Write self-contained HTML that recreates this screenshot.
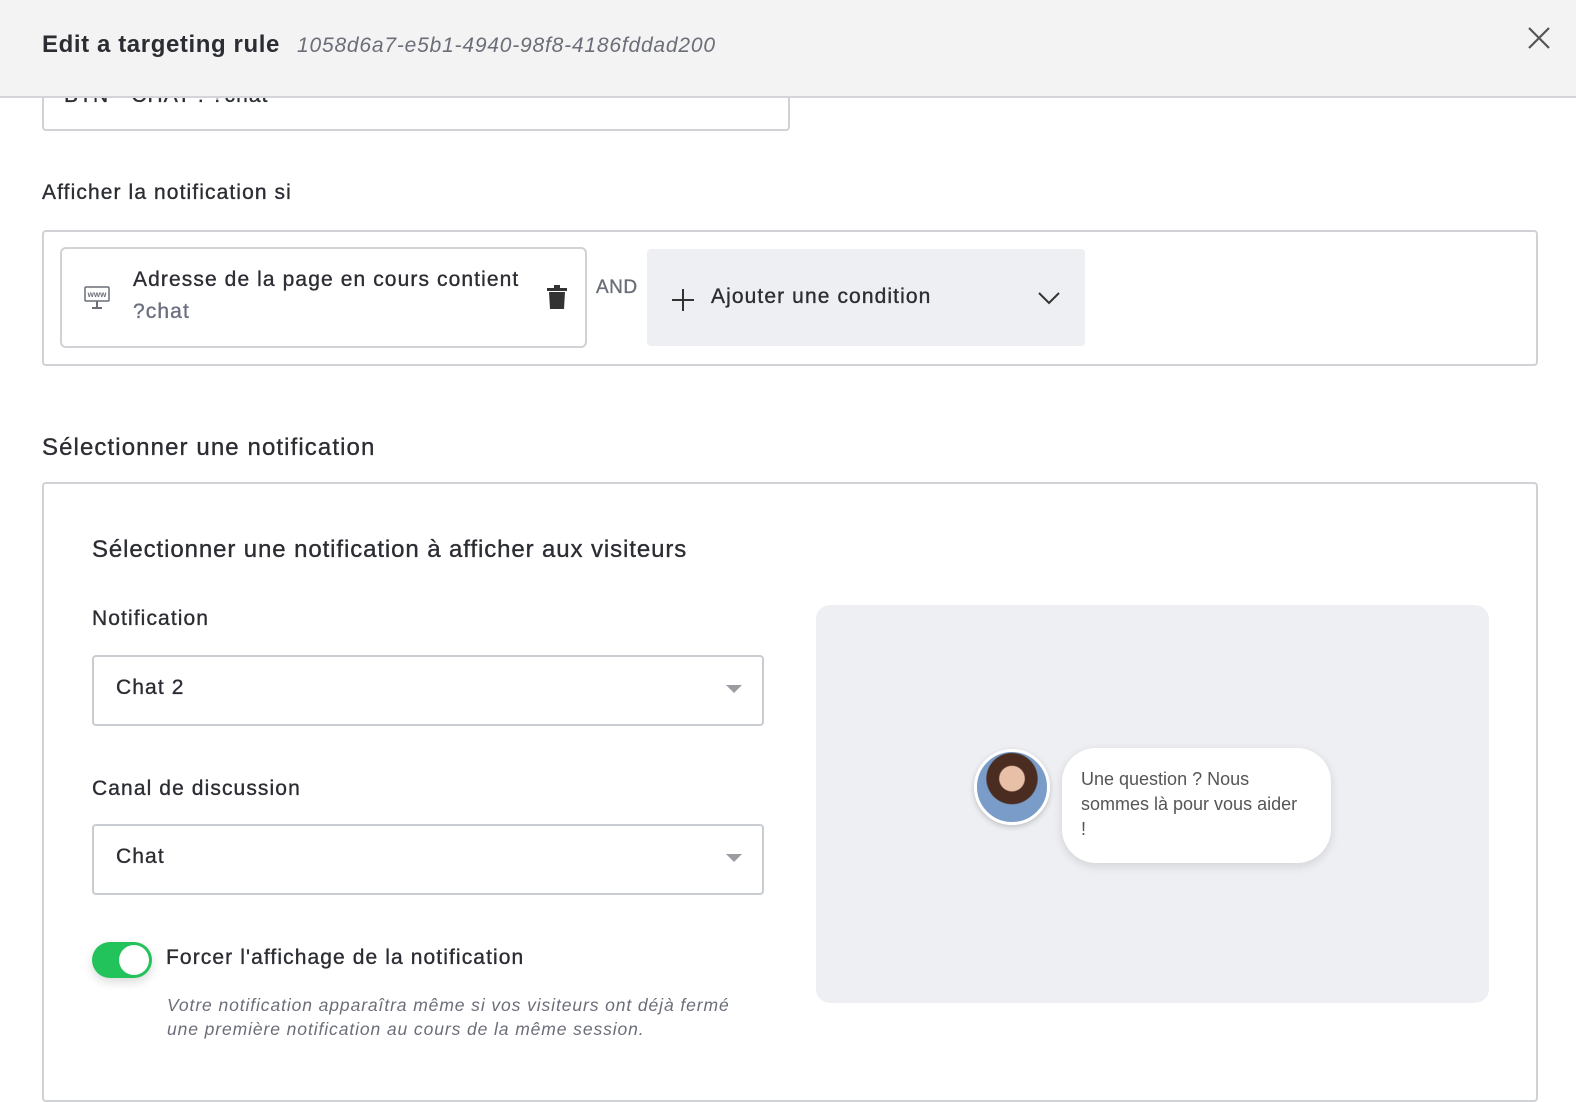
<!DOCTYPE html>
<html><head><meta charset="utf-8"><style>
*{box-sizing:border-box;margin:0;padding:0}
body{width:1576px;height:1072px;overflow:hidden;background:#fff;font-family:"Liberation Sans",sans-serif;color:#2b2d33;position:relative}
.a{position:absolute}
.t{font-size:21px;letter-spacing:1.1px;-webkit-text-stroke:0.35px #2b2d33;white-space:nowrap}
.hdr{left:0;top:0;width:1576px;height:98px;background:#f3f3f3;border-bottom:2px solid #d3d5d9;z-index:2}
.box{border:2px solid #d0d2d6;border-radius:4px}
.sel{border:2px solid #c9ccd1;border-radius:4px;background:#fff;padding:0 22px;line-height:62px}
.caret{position:absolute;right:20px;top:28px;width:0;height:0;border-left:8px solid transparent;border-right:8px solid transparent;border-top:8px solid #9a9ca2}
</style></head><body>
<div class="a hdr">
<div class="a" style="left:42px;top:31px;font-size:24px;font-weight:bold;color:#2b2d33;letter-spacing:0.6px">Edit a targeting rule</div>
<div class="a" style="left:297px;top:34px;font-size:21px;font-style:italic;color:#6b6e78;letter-spacing:0.8px">1058d6a7-e5b1-4940-98f8-4186fddad200</div>
<svg class="a" style="left:1527px;top:26px" width="24" height="24"><path d="M2 2L22 22M22 2L2 22" stroke="#555" stroke-width="2.2"/></svg>
</div>
<div class="a box" style="left:42px;top:70px;width:748px;height:61px"><div class="a t" style="left:20px;top:12px">BTN - CHAT : ?chat</div></div>
<div class="a t" style="left:42px;top:181px">Afficher la notification si</div>
<div class="a box" style="left:42px;top:230px;width:1496px;height:136px"></div>
<div class="a box" style="left:60px;top:247px;width:527px;height:101px;border-radius:6px"></div>
<svg class="a" style="left:84px;top:286px" width="26" height="24"><rect x="1" y="1" width="24" height="14" rx="1" fill="none" stroke="#6b6e78" stroke-width="1.5"/><text x="13" y="11" font-size="8" text-anchor="middle" fill="#6b6e78" font-family="Liberation Sans" font-weight="bold">www</text><path d="M13 15V21M8 22H18" stroke="#6b6e78" stroke-width="2"/></svg>
<div class="a t" style="left:133px;top:268px">Adresse de la page en cours contient</div>
<div class="a t" style="left:133px;top:300px;color:#6b7080;-webkit-text-stroke-color:#6b7080">?chat</div>
<svg class="a" style="left:547px;top:285px" width="20" height="25"><rect x="0" y="3" width="20" height="3" fill="#333"/><rect x="7" y="0" width="6" height="3" fill="#333"/><path d="M2 7H18L17 24H3Z" fill="#333"/></svg>
<div class="a t" style="left:596px;top:277px;font-size:19px;color:#6b6e78;-webkit-text-stroke-color:#6b6e78;letter-spacing:0.5px">AND</div>
<div class="a" style="left:647px;top:249px;width:438px;height:97px;background:#eeeff3;border-radius:4px"></div>
<svg class="a" style="left:671px;top:288px" width="24" height="24"><path d="M12 1V23M1 12H23" stroke="#333" stroke-width="2"/></svg>
<div class="a t" style="left:711px;top:285px">Ajouter une condition</div>
<svg class="a" style="left:1037px;top:291px" width="24" height="14"><path d="M2 2L12 12L22 2" stroke="#333" stroke-width="2" fill="none"/></svg>
<div class="a t" style="left:42px;top:434px;font-size:24px;letter-spacing:1.1px">Sélectionner une notification</div>
<div class="a box" style="left:42px;top:482px;width:1496px;height:620px"></div>
<div class="a t" style="left:92px;top:536px;font-size:24px;letter-spacing:0.9px">Sélectionner une notification à afficher aux visiteurs</div>
<div class="a t" style="left:92px;top:607px">Notification</div>
<div class="a sel t" style="left:92px;top:655px;width:672px;height:71px">Chat 2<div class="caret"></div></div>
<div class="a t" style="left:92px;top:777px">Canal de discussion</div>
<div class="a sel t" style="left:92px;top:824px;width:672px;height:71px">Chat<div class="caret"></div></div>
<div class="a" style="left:92px;top:942px;width:60px;height:36px;border-radius:18px;background:#22c35a;box-shadow:0 4px 10px rgba(0,0,0,.15)"><div class="a" style="right:3px;top:3px;width:30px;height:30px;border-radius:50%;background:#fff"></div></div>
<div class="a t" style="left:166px;top:946px">Forcer l'affichage de la notification</div>
<div class="a" style="left:167px;top:993px;font-size:17.5px;font-style:italic;color:#6b6e78;line-height:24px;letter-spacing:0.9px;white-space:nowrap">Votre notification apparaîtra même si vos visiteurs ont déjà fermé<br>une première notification au cours de la même session.</div>
<div class="a" style="left:816px;top:605px;width:673px;height:398px;background:#eeeff3;border-radius:14px"></div>
<div class="a" style="left:974px;top:749px;width:76px;height:76px;border-radius:50%;border:3px solid #fff;background:radial-gradient(circle at 50% 38%,#e8c0a8 0 22%,#4a2c20 24% 45%,#7a9cc8 47%);box-shadow:0 2px 6px rgba(0,0,0,.2)"></div>
<div class="a" style="left:1062px;top:748px;width:269px;height:115px;background:#fff;border-radius:34px;box-shadow:0 3px 10px rgba(0,0,0,.12);padding:19px 19px;font-size:18px;line-height:25px;color:#555;white-space:nowrap">Une question ? Nous<br>sommes là pour vous aider<br>!</div>
</body></html>
